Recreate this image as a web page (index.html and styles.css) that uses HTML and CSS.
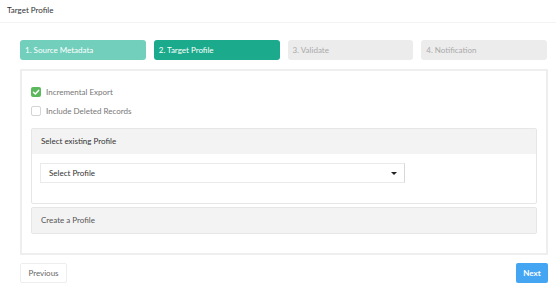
FILE: index.html
```html
<!DOCTYPE html>
<html>
<head>
<meta charset="utf-8">
<link rel="stylesheet" href="styles.css">
</head>
<body>
<div class="topbar">Target Profile</div>
<div class="wizard">
  <div class="steps">
    <div class="step done">1. Source Metadata</div>
    <div class="step active">2. Target Profile</div>
    <div class="step todo">3. Validate</div>
    <div class="step todo">4. Notification</div>
  </div>
  <div class="panel">
    <label class="check-row">
      <span class="box checked"><svg viewBox="0 0 10 10" width="10" height="10"><polyline points="2.5,5.2 4.3,7 7.6,3.4" fill="none" stroke="#fff" stroke-width="1.5" stroke-linecap="round" stroke-linejoin="round"/></svg></span>
      <span class="check-label">Incremental Export</span>
    </label>
    <label class="check-row">
      <span class="box"></span>
      <span class="check-label">Include Deleted Records</span>
    </label>
    <div class="sub">
      <div class="sub-head">Select existing Profile</div>
      <div class="sub-body">
        <div class="select">
          <span>Select Profile</span>
          <span class="caret"></span>
        </div>
      </div>
    </div>
    <div class="sub collapsed">
      <div class="sub-head">Create a Profile</div>
    </div>
  </div>
  <div class="actions">
    <button class="btn prev">Previous</button>
    <button class="btn next">Next</button>
  </div>
</div>
</body>
</html>
```
FILE: styles.css
```css
* { box-sizing: border-box; }
body {
  margin: 0;
  font-family: Lato, "Open Sans", sans-serif;
  font-size: 8px;
  color: #333;
  background: #fff;
}
.topbar {
  height: 23px;
  padding-left: 7px;
  line-height: 20px;
  border-bottom: 1px solid #f3f3f3;
  color: #333;
}
.wizard {
  padding: 17px 8px 0 20px;
}
.steps {
  display: flex;
  gap: 8px;
  margin-right: 1px;
}
.step {
  flex: 1;
  height: 20px;
  line-height: 20px;
  padding-left: 5px;
  border-radius: 3px;
  color: #fff;
}
.step.done { background: #72cfbb; }
.step.active { background: #1bab8c; }
.step.todo { background: #ececec; color: #aaa; }
.panel {
  margin-top: 9px;
  border: 2px solid #eeeeee;
  padding: 16px 9px 19px 9px;
}
.check-row {
  display: flex;
  align-items: center;
  height: 10px;
  margin-bottom: 9px;
}
.box {
  width: 10px;
  height: 10px;
  border: 1px solid #d4d4d4;
  border-radius: 2px;
  background: #fff;
  display: flex;
  align-items: center;
  justify-content: center;
}
.box.checked {
  border: none;
  background: #5cb85c;
}
.check-label {
  margin-left: 5px;
  color: #777;
}
.sub {
  margin-top: 12px;
  border: 1px solid #e6e6e6;
  border-radius: 2px;
}
.sub.collapsed { margin-top: 3px; }
.sub-head {
  background: #f3f3f3;
  height: 25px;
  line-height: 25px;
  padding-left: 9px;
  color: #333;
}
.sub.collapsed .sub-head { color: #555; }
.sub-body {
  padding: 9px 8px 20px 8px;
}
.select {
  width: 365px;
  height: 20px;
  border: 1px solid #eaeaea;
  border-right-color: #d8d8d8;
  display: flex;
  align-items: center;
  justify-content: space-between;
  padding: 0 7px 0 8px;
}
.caret {
  width: 0;
  height: 0;
  border-left: 3px solid transparent;
  border-right: 3px solid transparent;
  border-top: 3px solid #222;
}
.actions {
  margin-top: 8px;
  display: flex;
  justify-content: space-between;
}
.btn {
  font-family: inherit;
  font-size: 8px;
  height: 20px;
  border-radius: 2px;
  cursor: pointer;
}
.btn.prev {
  width: 47px;
  background: #fff;
  border: 1px solid #eeeeee;
  color: #666;
}
.btn.next {
  width: 32px;
  background: #44a6f3;
  border: none;
  color: #fff;
  font-weight: bold;
}
```
